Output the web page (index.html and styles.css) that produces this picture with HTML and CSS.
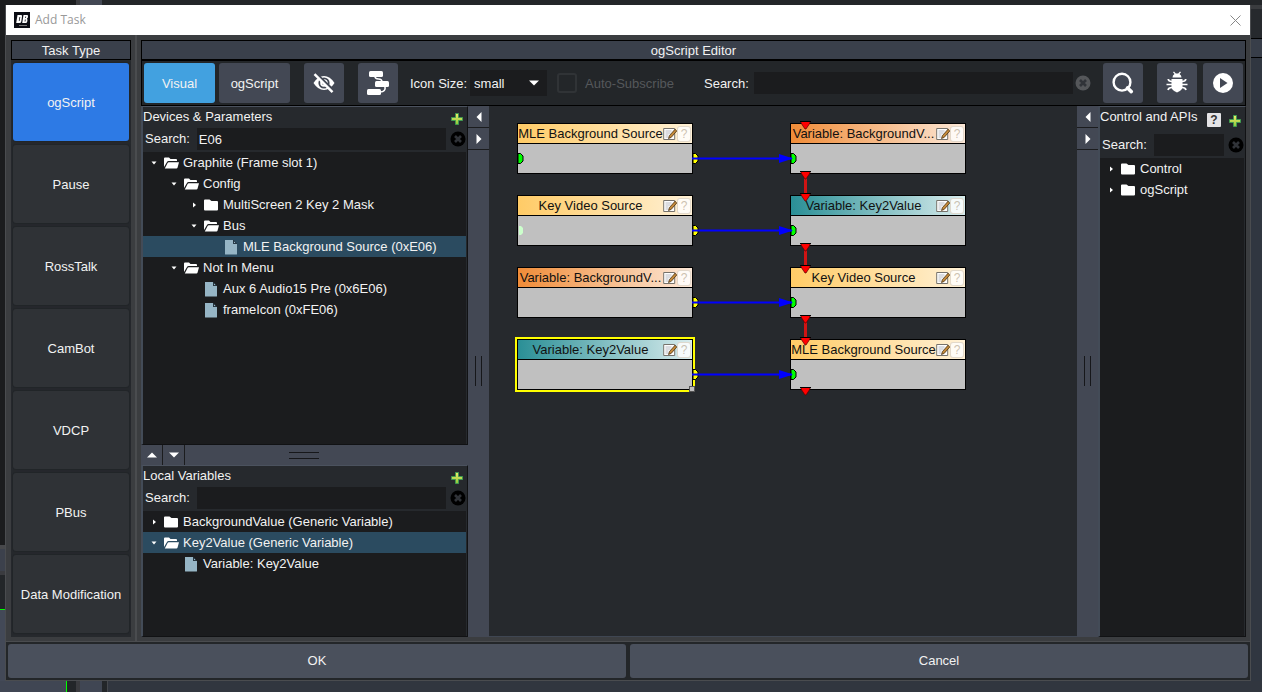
FILE: index.html
```
<!DOCTYPE html>
<html lang="en">
<head>
<meta charset="utf-8">
<title>Add Task</title>
<link rel="stylesheet" href="styles.css">
</head>
<body>
<svg class="defs" aria-hidden="true">
  <defs>
    <linearGradient id="plus-fill" x1="0" y1="0" x2="0" y2="1"><stop offset="0" stop-color="#f2ee6a"/><stop offset="1" stop-color="#8cc63a"/></linearGradient>
    <symbol id="plus" viewBox="0 0 12 12"><path d="M4.5.5h3v4h4v3h-4v4h-3v-4h-4v-3h4z" fill="url(#plus-fill)" stroke="#3f9a50"/></symbol>
    <symbol id="clear" viewBox="0 0 16 16"><circle cx="8" cy="8" r="7.5" fill="currentColor"/><path d="M5 5l6 6M11 5l-6 6" stroke="#303338" stroke-width="2.6"/></symbol>
    <symbol id="open" viewBox="0 0 16 12"><path d="M0 10V1.500Q0 .5 1 .5h4l1.500 1.500H12q1 0 1 1V4H4.500Q3.500 4 3 5z" fill="#fff"/><path d="M.8 11.500L3.600 6Q3.900 5.200 4.800 5.200H15l-1.500 5.500q-.3.800-1 .8z" fill="#fff"/></symbol>
    <symbol id="folder" viewBox="0 0 16 12"><path d="M0 1.500Q0 .5 1 .5h4.500L7.500 2H13q1 0 1 1v7.500q0 1-1 1H1q-1 0-1-1z" fill="#fff"/></symbol>
    <symbol id="file" viewBox="0 0 16 16"><path d="M1 1h8v4h4v10q0 .5-.5.500h-11Q1 15.500 1 15z" fill="#96b5c5"/><path d="M9.500 1.300v3.200H12.500z" fill="#96b5c5" stroke="#1c2a33" stroke-width=".8"/></symbol>
    <symbol id="down" viewBox="0 0 8 8"><path d="M1.500 2.500h5L4 5.500z" fill="#fff"/></symbol>
    <symbol id="right" viewBox="0 0 8 8"><path d="M3 1.500v5l3-2.500z" fill="#fff"/></symbol>
    <symbol id="tri-up" viewBox="0 0 10 6"><path d="M0 5.500L5 .5l5 5z" fill="#fff"/></symbol>
    <symbol id="tri-down" viewBox="0 0 10 6"><path d="M0 .5h10l-5 5z" fill="#fff"/></symbol>
    <symbol id="tri-left" viewBox="0 0 6 10"><path d="M5.500 0v10L.5 5z" fill="#fff"/></symbol>
    <symbol id="tri-right" viewBox="0 0 6 10"><path d="M.5 0v10l5-5z" fill="#fff"/></symbol>
    <symbol id="edit" viewBox="0 0 14 14"><path d="M.7 1.500h11v11h-11z" fill="#fdfdfd" stroke="#77736c"/><path d="M2.500 4h6M2.500 6h5M2.500 8h3M2.500 10h3" stroke="#b9bcc4"/><path d="M5.500 11.500l1-3L12 2.300l1.800 1.600-5.600 6.500z" fill="#c58a3a" stroke="#4b3517" stroke-width=".8"/></symbol>
    <symbol id="out" viewBox="0 0 6 11"><path d="M0 .5h2.500l2.500 2.500v5L2.500 10.500H0z" fill="#ff0" stroke="#000"/></symbol>
    <symbol id="in" viewBox="0 0 6 11"><path d="M0 .5h2.500l2.500 2.500v5l-2.500 2.500H0z" fill="#0f0" stroke="#000"/></symbol>
    <symbol id="flow" viewBox="0 0 11 9"><path d="M1 .5h9v1.500L6 8H5L1 2z" fill="#f00" stroke="#500" stroke-width=".7"/><path d="M0 .5h11" stroke="#000"/></symbol>
  </defs>
</svg>

<div class="edge edge-top"></div>
<div class="edge edge-left"></div>
<div class="edge edge-right"></div>
<div class="edge edge-bottom"></div>

<main class="dialog">
  <header class="titlebar">
    <svg class="logo" viewBox="0 0 16 16"><path fill="#0b0d14" d="M0 0h16v16H0z"/><path fill="#fff" fill-rule="evenodd" d="M3.500 3H7q1.300 0 1 1.400L7.300 9.500Q7 11 5.600 11H2.200zm2 2L4.800 9h.7l.8-4zM9.500 3H13q1.200 0 1 1.300l-.2 1.400-.9 1 .6 1-.3 2Q13 11 11.700 11H8.200zm1.900 1.600L11.200 6h.7l.3-1.400zM10.900 7.600L10.600 9.400h.8l.3-1.800z"/><path stroke="#777" d="M5 13.500h8"/></svg>
    <h1 class="title">Add Task</h1>
    <button class="close" aria-label="Close"><svg viewBox="0 0 11 11"><path d="M.5.5l10 10M10.500.5l-10 10" stroke="#888" fill="none"/></svg></button>
  </header>

  <div class="content">
    <nav class="tasks">
      <h2 class="caption">Task Type</h2>
      <div class="task-list">
        <button class="task task-active">ogScript</button>
        <button class="task">Pause</button>
        <button class="task">RossTalk</button>
        <button class="task">CamBot</button>
        <button class="task">VDCP</button>
        <button class="task">PBus</button>
        <button class="task">Data Modification</button>
      </div>
    </nav>
    <div class="divider"></div>

    <section class="editor">
      <h2 class="caption">ogScript Editor</h2>
      <div class="toolbar">
        <div class="group tabs">
          <button class="tool tab tab-active">Visual</button>
          <button class="tool tab">ogScript</button>
        </div>
        <button class="tool icon-tool" aria-label="Hide"><svg viewBox="0 0 24 24"><path d="M1.500 12Q6 5 12 5t10.500 7Q18 19 12 19T1.500 12z" fill="#fff"/><circle cx="12" cy="12" r="4.700" fill="none" stroke="#434854" stroke-width="1.800"/><path d="M12 10a2 2 0 1 1-2 2q2 1 2-2z" fill="#434854"/><path d="M3.800 2.600L22 20.200" stroke="#434854" stroke-width="3"/><path d="M2.500 3.200L20.500 21.200" stroke="#fff" stroke-width="2.400"/></svg></button>
        <button class="tool icon-tool" aria-label="Arrange nodes"><svg viewBox="0 0 24 24"><rect x="3" y="0" width="14" height="6" rx="1.500" fill="#fff"/><rect x="9" y="10" width="14" height="6" rx="1.500" fill="#fff"/><rect x="1" y="18" width="14" height="6" rx="1.500" fill="#fff"/><path d="M9 5q0 3 3.500 3t3.500 3M19 15q1 6-5 6" fill="none" stroke="#fff" stroke-width="1.600"/></svg></button>
        <div class="size">
          <label for="size">Icon Size:</label>
          <span class="select-wrap"><select id="size"><option>small</option><option>large</option></select><svg class="caret"><use href="#tri-down"/></svg></span>
        </div>
        <label class="subscribe"><input type="checkbox" disabled><span>Auto-Subscribe</span></label>
        <div class="find">
          <label for="find">Search:</label>
          <input class="field" id="find" type="text">
          <button class="plain find-clear" aria-label="Clear search"><svg class="i16"><use href="#clear"/></svg></button>
        </div>
        <button class="tool icon-tool" aria-label="Find"><svg viewBox="0 0 24 24"><circle cx="11" cy="11.200" r="8.400" fill="none" stroke="#fff" stroke-width="2.400"/><path d="M16.500 17l3.800 3.600" stroke="#fff" stroke-width="3.600" stroke-linecap="round"/></svg></button>
        <div class="group run">
          <button class="tool icon-tool" aria-label="Debug"><svg viewBox="0 0 24 24"><path d="M7.500 6.500Q7.500 4 9.500 3L8 1.200 9 .5l1.800 2h2.400l1.800-2 1 .7L14.500 3q2 1 2 3.500zM6.500 8h11v8q0 3-5.500 5.500Q6.500 19 6.500 16z" fill="#fff"/><path d="M7 10.500Q3.500 10.500 3.200 8M7 13.500H1.500M7 16.500q-3.500 0-4 2.500M17 10.500q3.500 0 3.800-2.500M17 13.500h5.500M17 16.500q3.500 0 4 2.500" fill="none" stroke="#fff" stroke-width="1.700"/></svg></button>
          <button class="tool icon-tool" aria-label="Run"><svg viewBox="0 0 24 24"><circle cx="12" cy="12" r="10" fill="#fff"/><path d="M9 7v10l7.500-5z" fill="#434854"/></svg></button>
        </div>
      </div>

      <div class="workspace">
        <div class="side">
          <section class="panel devices">
            <div class="panel-title"><h3>Devices &amp; Parameters</h3><button class="plain" aria-label="Add device"><svg class="i12"><use href="#plus"/></svg></button></div>
            <div class="search"><label for="s1">Search:</label><input class="field" id="s1" type="text" value="E06"><button class="plain" aria-label="Clear"><svg class="i16"><use href="#clear"/></svg></button></div>
            <ul class="tree">
              <li class="row"><svg class="i8"><use href="#down"/></svg><svg class="fold"><use href="#open"/></svg>Graphite (Frame slot 1)</li>
              <li class="row level-1"><svg class="i8"><use href="#down"/></svg><svg class="fold"><use href="#open"/></svg>Config</li>
              <li class="row level-2"><svg class="i8"><use href="#right"/></svg><svg class="fold"><use href="#folder"/></svg>MultiScreen 2 Key 2 Mask</li>
              <li class="row level-2"><svg class="i8"><use href="#down"/></svg><svg class="fold"><use href="#open"/></svg>Bus</li>
              <li class="row level-3 selected"><span class="i8"></span><svg class="doc"><use href="#file"/></svg>MLE Background Source (0xE06)</li>
              <li class="row level-1"><svg class="i8"><use href="#down"/></svg><svg class="fold"><use href="#open"/></svg>Not In Menu</li>
              <li class="row level-2"><span class="i8"></span><svg class="doc"><use href="#file"/></svg>Aux 6 Audio15 Pre (0x6E06)</li>
              <li class="row level-2"><span class="i8"></span><svg class="doc"><use href="#file"/></svg>frameIcon (0xFE06)</li>
            </ul>
          </section>
          <div class="split-h">
            <button class="split-btn" aria-label="Collapse up"><svg class="tri-v"><use href="#tri-up"/></svg></button>
            <button class="split-btn" aria-label="Collapse down"><svg class="tri-v"><use href="#tri-down"/></svg></button>
            <span class="grip-h"></span>
          </div>
          <section class="panel locals">
            <div class="panel-title"><h3>Local Variables</h3><button class="plain" aria-label="Add variable"><svg class="i12"><use href="#plus"/></svg></button></div>
            <div class="search"><label for="s2">Search:</label><input class="field" id="s2" type="text"><button class="plain" aria-label="Clear"><svg class="i16"><use href="#clear"/></svg></button></div>
            <ul class="tree">
              <li class="row"><svg class="i8"><use href="#right"/></svg><svg class="fold"><use href="#folder"/></svg>BackgroundValue (Generic Variable)</li>
              <li class="row selected"><svg class="i8"><use href="#down"/></svg><svg class="fold"><use href="#open"/></svg>Key2Value (Generic Variable)</li>
              <li class="row level-1"><span class="i8"></span><svg class="doc"><use href="#file"/></svg>Variable: Key2Value</li>
            </ul>
          </section>
        </div>

        <div class="split-v">
          <button class="split-btn" aria-label="Collapse left"><svg class="tri-h"><use href="#tri-left"/></svg></button>
          <button class="split-btn" aria-label="Expand right"><svg class="tri-h"><use href="#tri-right"/></svg></button>
          <span class="grip-v"></span>
        </div>

        <div class="canvas">
          <article class="node amber col-a row-1"><h4><span>MLE Background Source</span><button class="plain" aria-label="Edit"><svg class="i14"><use href="#edit"/></svg></button><button class="help">?</button></h4></article>
          <article class="node amber col-a row-2"><h4><span>Key Video Source</span><button class="plain" aria-label="Edit"><svg class="i14"><use href="#edit"/></svg></button><button class="help">?</button></h4></article>
          <article class="node orange col-a row-3"><h4><span>Variable: BackgroundV...</span><button class="plain" aria-label="Edit"><svg class="i14"><use href="#edit"/></svg></button><button class="help">?</button></h4></article>
          <article class="node teal col-a row-4 picked"><h4><span>Variable: Key2Value</span><button class="plain" aria-label="Edit"><svg class="i14"><use href="#edit"/></svg></button><button class="help">?</button></h4></article>
          <article class="node orange col-b row-1"><h4><span>Variable: BackgroundV...</span><button class="plain" aria-label="Edit"><svg class="i14"><use href="#edit"/></svg></button><button class="help">?</button></h4></article>
          <article class="node teal col-b row-2"><h4><span>Variable: Key2Value</span><button class="plain" aria-label="Edit"><svg class="i14"><use href="#edit"/></svg></button><button class="help">?</button></h4></article>
          <article class="node amber col-b row-3"><h4><span>Key Video Source</span><button class="plain" aria-label="Edit"><svg class="i14"><use href="#edit"/></svg></button><button class="help">?</button></h4></article>
          <article class="node amber col-b row-4"><h4><span>MLE Background Source</span><button class="plain" aria-label="Edit"><svg class="i14"><use href="#edit"/></svg></button><button class="help">?</button></h4></article>
          <svg class="wires" aria-hidden="true">
            <defs>
              <g id="link"><use href="#out" x="204" y="47" width="6" height="11"/><use href="#in" x="302" y="47" width="6" height="11"/><path d="M203 52.500h100" stroke="#00f" stroke-width="2"/><path d="M290 48l14 4.500-14 4.500z" fill="#00f"/></g>
              <g id="step"><path d="M316.500 68v22" stroke="#d01414" stroke-width="3"/><use href="#flow" x="311" y="65" width="11" height="9"/><use href="#flow" x="311" y="87" width="11" height="9"/></g>
            </defs>
            <use href="#in" x="29" y="47" width="6" height="11"/>
            <path d="M30 120h2l2 2v5l-2 2h-2z" fill="#cfc"/>
            <use href="#link"/><use href="#link" y="72"/><use href="#link" y="144"/><use href="#link" y="216"/>
            <use href="#flow" x="311" y="15" width="11" height="9"/>
            <use href="#step"/><use href="#step" y="72"/><use href="#step" y="144"/>
            <use href="#flow" x="311" y="281" width="11" height="9"/>
            <rect x="200.500" y="280.500" width="5" height="5" fill="#c0c0c0" stroke="#555"/>
          </svg>
        </div>

        <div class="split-v">
          <button class="split-btn" aria-label="Expand left"><svg class="tri-h"><use href="#tri-left"/></svg></button>
          <button class="split-btn" aria-label="Collapse right"><svg class="tri-h"><use href="#tri-right"/></svg></button>
          <span class="grip-v"></span>
        </div>

        <section class="panel apis">
          <div class="panel-title"><h3>Control and APIs</h3><button class="api-help">?</button><button class="plain" aria-label="Add control"><svg class="i12"><use href="#plus"/></svg></button></div>
          <div class="search"><label for="s3">Search:</label><input class="field" id="s3" type="text"><button class="plain" aria-label="Clear"><svg class="i16"><use href="#clear"/></svg></button></div>
          <ul class="tree">
            <li class="row"><svg class="i8"><use href="#right"/></svg><svg class="fold"><use href="#folder"/></svg>Control</li>
            <li class="row"><svg class="i8"><use href="#right"/></svg><svg class="fold"><use href="#folder"/></svg>ogScript</li>
          </ul>
        </section>
      </div>
    </section>
  </div>

  <footer class="actions">
    <button class="action">OK</button>
    <button class="action">Cancel</button>
  </footer>
</main>
</body>
</html>
```
FILE: styles.css
```
* { box-sizing: border-box; }
html, body { height: 100%; }
body {
  margin: 0;
  display: grid;
  grid-template: 5px minmax(0, 1fr) 11px / 5px minmax(0, 1fr) 11px;
  grid-template-areas: "t t t" "l d r" "b b b";
  background: #343a45;
  color: #f2f2f2;
  font: 13px/20px "Liberation Sans", Arial, sans-serif;
  overflow: hidden;
}
h1, h2, h3, h4, ul { margin: 0; padding: 0; font: inherit; list-style: none; }
button, input, select { font: inherit; color: inherit; margin: 0; border: 0; padding: 0; }
svg { display: block; flex: none; }
.defs { position: absolute; width: 0; height: 0; }

.edge-top { grid-area: t; background: linear-gradient(90deg, #1b1c1e 76px, #3a3b3f 76px 80px, #434854 80px 102px, #232629 102px); }
.edge-left { grid-area: l; background: linear-gradient(#1b1c1e 540px, #47484b 540px 544px, #3c414c 544px 566px, #3a3b3f 566px 570px, #232629 570px 604px, #0f0 604px 605px, #434957 605px); }
.edge-right { grid-area: r; background: linear-gradient(#3a3c3f 4px, #26292d 4px 33px, #000 33px 34px, #383e49 34px 52px, #000 52px 53px, #303640 53px); }
.edge-bottom { grid-area: b; background: linear-gradient(90deg, #404653 66px, #0f0 66px 67px, #232629 67px 76px, #3a3b3f 76px 80px, #404653 80px 102px, #232629 102px 107px, #45484d 107px 108px, #31363f 108px); }

.dialog {
  grid-area: d;
  display: flex;
  flex-direction: column;
  border: 1px solid #4a4c4f;
  border-top: 0;
  background: #3b3d40;
  min-height: 0;
}
.titlebar { display: flex; align-items: center; gap: 5px; height: 30px; padding: 0 9px 0 8px; background: #fff; color: #999; }
.logo { width: 16px; height: 16px; }
.title { flex: 1; font: 12px/20px "Open Sans", sans-serif; }
.close { background: none; }
.close svg { width: 11px; height: 11px; }

.content { flex: 1; display: flex; min-height: 0; padding: 5px 4px 4px 5px; }
.caption { height: 20px; line-height: 20px; border: 1px solid #000; background: #3a404b; text-align: center; }
.tasks { width: 120px; display: flex; flex-direction: column; background: #26292d; }
.task-list { flex: 1; display: flex; flex-direction: column; gap: 4px; padding: 3px 2px 4px; }
.task { flex: 1; padding-top: 2px; border-radius: 3px; background: #2f3236; box-shadow: 0 0 1px 1px #222528; }
.task-active { background: #2d7ae5; }
.divider { width: 2px; margin: -5px 4px -4px; background: #4a4c4f; }

.editor { flex: 1; min-width: 0; display: flex; flex-direction: column; }
.toolbar { display: flex; align-items: center; height: 46px; padding: 0 2px; border: 1px solid #000; background: #232629; }
.group { display: flex; }
.tabs { gap: 4px; margin-right: 14px; }
.run { gap: 6px; margin-left: 14px; }
.tool { height: 40px; border-radius: 3px; background: #434854; }
.tab { width: 71px; padding-top: 2px; }
.tab-active { background: #42a1e0; }
.icon-tool { width: 40px; display: grid; place-items: center; }
.icon-tool + .icon-tool { margin-left: 14px; }
.run .icon-tool { margin-left: 0; }
.icon-tool svg { width: 24px; height: 24px; }
.size { display: flex; align-items: center; gap: 3px; margin: 0 10px 0 12px; }
.size label, .subscribe span, .find label { padding-top: 2px; }
.select-wrap { position: relative; }
select { display: block; width: 77px; height: 26px; padding: 2px 4px 0; appearance: none; background: #1b1c1e; }
.caret { position: absolute; right: 8px; top: 10px; width: 10px; height: 6px; pointer-events: none; }
.subscribe { display: flex; align-items: center; gap: 8px; color: #55585b; }
.subscribe input { appearance: none; width: 20px; height: 20px; border: 2px solid #303336; border-radius: 3px; }
.find { flex: 1; display: flex; align-items: center; margin: 0 12px 0 30px; }
.find .field { margin: 0 2px 0 5px; }
.find-clear { color: #55575a; }
.field { flex: 1; min-width: 0; height: 22px; padding: 0 2px; background: #1b1c1e; outline: 0; }
.plain { background: none; display: block; }
.i8 { width: 8px; height: 8px; flex: none; }
.i12 { width: 12px; height: 12px; }
.i14 { width: 14px; height: 14px; }
.i16 { width: 16px; height: 16px; }

.workspace { flex: 1; display: flex; min-height: 0; }
.side { width: 327px; display: flex; flex-direction: column; }
.panel { border: 1px solid #111214; border-top-color: #4b525e; border-left: 2px solid #434b57; background: #26292d; display: flex; flex-direction: column; }
.devices { flex: 1; min-height: 0; }
.locals { height: 172px; }
.panel-title { display: flex; height: 21px; padding-right: 4px; }
.panel-title h3 { flex: 1; }
.panel-title .plain { margin-top: 6px; align-self: flex-start; }
.search { display: flex; align-items: center; height: 24px; padding: 0 1px 2px 2px; }
.search .field { margin: 0 4px 0 7px; }
.search .plain { color: #000; }
.tree { flex: 1; background: #1b1c1e; margin-right: 1px; }
.row { display: flex; align-items: center; height: 21px; padding-left: 7px; white-space: nowrap; }
.level-1 { padding-left: 27px; }
.level-2 { padding-left: 47px; }
.level-3 { padding-left: 67px; }
.selected { background: #2b4b60; }
.fold { width: 16px; height: 12px; margin: 0 3px 0 6px; }
.doc { width: 16px; height: 16px; margin: 0 3px 0 6px; }

.split-h { display: flex; height: 20px; background: #434854; position: relative; }
.split-btn { display: grid; place-items: center; background: #434854; }
.split-h .split-btn { width: 22px; border-right: 1px solid #1b1c1e; }
.tri-v { width: 10px; height: 6px; }
.tri-h { width: 6px; height: 10px; }
.grip-h { position: absolute; left: 148px; top: 7px; width: 30px; height: 7px; border: solid #16171a; border-width: 1px 0; }
.split-v { position: relative; width: 21px; background: #434854; }
.split-v .split-btn { width: 21px; height: 22px; border-bottom: 1px solid #1b1c1e; }
.grip-v { position: absolute; left: 7px; top: 250px; width: 7px; height: 30px; border: solid #16171a; border-width: 0 1px; }

.canvas { position: relative; flex: 1; min-width: 0; overflow: hidden; background: #26292d; border-bottom: 1px solid #3f4652; }
.node { position: absolute; width: 176px; height: 51px; border: 1px solid #000; background: #c0c0c0; color: #111; }
.node h4 { display: flex; align-items: center; height: 20px; padding-right: 1px; border-bottom: 1px solid #000; }
.node h4 span { flex: 1; min-width: 0; text-align: center; white-space: nowrap; }
.col-a { left: 28px; }
.col-b { left: 301px; }
.row-1 { top: 17px; }
.row-2 { top: 89px; }
.row-3 { top: 161px; }
.row-4 { top: 233px; }
.amber h4 { background: linear-gradient(90deg, #ffcb66, #fff1d6); }
.orange h4 { background: linear-gradient(90deg, #f08c38, #fce8d8); }
.teal h4 { background: linear-gradient(90deg, #2a8f96, #d8eced); }
.picked { outline: 2px solid #ff0; }
.help { width: 14px; height: 16px; border: 1px solid #b9a58a66; border-radius: 3px; background: #fffc; color: #a9988099; font-size: 12px; line-height: 14px; }
.wires { position: absolute; inset: 0; width: 100%; height: 100%; pointer-events: none; }

.apis { width: 148px; }
.apis .panel-title { height: 27px; gap: 8px; }
.apis .panel-title .plain { margin-top: 8px; }
.api-help { width: 14px; height: 14px; margin-top: 6px; border-radius: 1px; background: #e4e4e6; color: #333; font-size: 12px; font-weight: bold; line-height: 14px; }

.actions { display: flex; gap: 4px; padding: 2px; border-top: 1px solid #4a4c4f; background: #232629; }
.action { flex: 1; height: 34px; border-radius: 3px; background: #4a505c; }
```
